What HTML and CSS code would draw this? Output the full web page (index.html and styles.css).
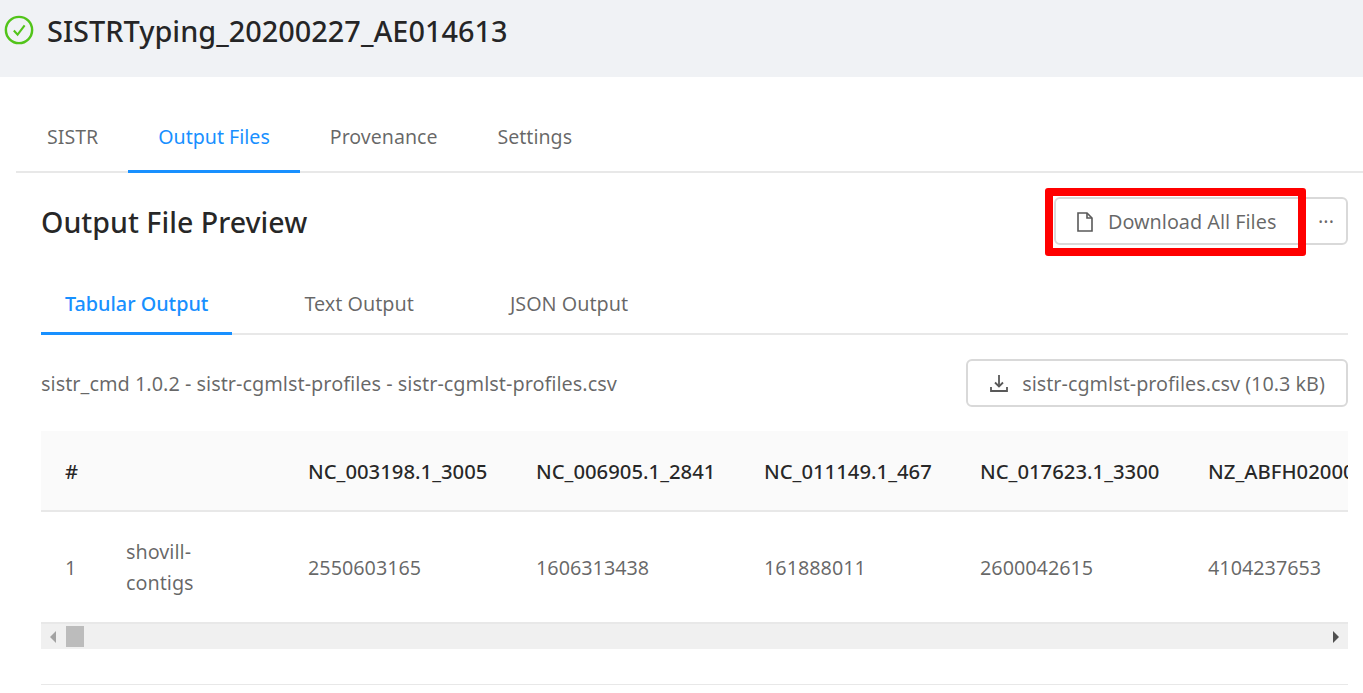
FILE: index.html
```html
<!DOCTYPE html>
<html>
  <head>
    <title>SISTRTyping_20200227_AE014613</title>
    <link rel="stylesheet" href="styles.css">
  </head>
  <body>
    <header class="page-header">
      <svg class="status-icon" viewBox="0 0 32 32" fill="none" stroke="#52c41a">
        <circle cx="16" cy="16" r="14" stroke-width="2.6"/>
        <path d="M10.5 16.5l4 4.5 7.5-10" stroke-width="2.2"/>
      </svg>
      <h1>SISTRTyping_20200227_AE014613</h1>
    </header>

    <nav class="main-tabs">
      <a class="main-tab">SISTR</a>
      <a class="main-tab active">Output Files</a>
      <a class="main-tab">Provenance</a>
      <a class="main-tab">Settings</a>
    </nav>

    <main class="content">
      <div class="preview-head">
        <h2>Output File Preview</h2>
        <div class="btn-group">
          <button class="btn btn-download">
            <svg class="icon-file" viewBox="0 0 18 20" fill="none" stroke="#595959" stroke-width="1.6">
              <path d="M2 1h9l5 5v13H2z"/>
              <path d="M11 1v5h5"/>
            </svg>
            Download All Files
          </button>
          <button class="btn btn-more">&middot;&middot;&middot;</button>
        </div>
        <div class="highlight"></div>
      </div>

      <div class="sub-tabs">
        <a class="sub-tab active">Tabular Output</a>
        <a class="sub-tab">Text Output</a>
        <a class="sub-tab">JSON Output</a>
      </div>

      <div class="file-row">
        <span class="file-path">sistr_cmd 1.0.2 - sistr-cgmlst-profiles - sistr-cgmlst-profiles.csv</span>
        <button class="btn btn-file">
          <svg class="icon-save" viewBox="0 0 20 20" fill="none" stroke="#595959" stroke-width="1.8">
            <path d="M10 2v11"/>
            <path d="M6 9.5l4 4 4-4" />
            <path d="M2 14v4h16v-4"/>
          </svg>
          sistr-cgmlst-profiles.csv (10.3 kB)
        </button>
      </div>

      <div class="table-wrap">
        <table>
          <thead>
            <tr>
              <th class="col-index">#</th>
              <th class="col-name"></th>
              <th class="col-wide">NC_003198.1_3005</th>
              <th class="col-wide">NC_006905.1_2841</th>
              <th class="col-narrow">NC_011149.1_467</th>
              <th class="col-wide">NC_017623.1_3300</th>
              <th class="col-wide">NZ_ABFH02000001_1000</th>
            </tr>
          </thead>
          <tbody>
            <tr>
              <td>1</td>
              <td>shovill-<br>contigs</td>
              <td>2550603165</td>
              <td>1606313438</td>
              <td>161888011</td>
              <td>2600042615</td>
              <td>4104237653</td>
            </tr>
          </tbody>
        </table>
      </div>

      <div class="scrollbar">
        <span class="arrow-left"></span>
        <span class="thumb"></span>
        <span class="arrow-right"></span>
      </div>

      <div class="bottom-rule"></div>
    </main>
  </body>
</html>
```

FILE: styles.css
```css
body {
  margin: 0;
  font-family: "Noto Sans", Arial, sans-serif;
  font-size: 19.8px;
  color: rgba(0, 0, 0, 0.6);
  background-color: #fff;
  overflow: hidden;
}
h1,
h2 {
  margin: 0;
  color: rgba(0, 0, 0, 0.85);
  font-weight: 500;
}
.page-header {
  height: 77px;
  box-sizing: border-box;
  padding: 15px 0 0 4px;
  display: flex;
  align-items: flex-start;
  background-color: #f0f2f5;
}
.status-icon {
  width: 30px;
  height: 30px;
  margin-right: 13px;
}
.page-header h1 {
  font-size: 28.9px;
  line-height: 31px;
}
.main-tabs {
  display: flex;
  height: 96px;
  margin-left: 16px;
  padding-left: 1px;
  box-sizing: border-box;
  align-items: flex-end;
  border-bottom: 2px solid #e8e8e8;
}
.main-tab {
  padding: 0 30px;
  height: 50px;
  margin-bottom: -2px;
  box-sizing: border-box;
  font-size: 19.6px;
  white-space: nowrap;
}
.main-tab.active {
  color: #1890ff;
  border-bottom: 3px solid #1890ff;
}
.content {
  position: relative;
  padding: 0 15px 0 41px;
}
.preview-head {
  display: flex;
  justify-content: space-between;
  align-items: center;
  height: 96px;
}
.preview-head h2 {
  font-size: 28.6px;
}
.btn {
  font: inherit;
  color: rgba(0, 0, 0, 0.6);
  background-color: #fff;
  border: 2px solid #d9d9d9;
  border-radius: 6px;
  height: 48px;
  cursor: pointer;
}
.btn-group {
  display: flex;
}
.btn-download {
  width: 252px;
  padding: 1px 0 0 20px;
  border-radius: 6px 0 0 6px;
  display: flex;
  align-items: center;
  gap: 14px;
  white-space: nowrap;
}
.btn-more {
  width: 44px;
  margin-left: -2px;
  border-radius: 0 6px 6px 0;
}
.icon-file {
  width: 18px;
  height: 20px;
}
.icon-save {
  width: 20px;
  height: 20px;
}
.highlight {
  position: absolute;
  top: 15px;
  left: 1045px;
  width: 245px;
  height: 52px;
  border: 8px solid #f00;
  border-radius: 3px;
}
.sub-tabs {
  display: flex;
  height: 66px;
  border-bottom: 2px solid #e8e8e8;
  box-sizing: border-box;
}
.sub-tab {
  padding: 21px 24px 0;
  margin-right: 48px;
  height: 66px;
  box-sizing: border-box;
  white-space: nowrap;
}
.sub-tab.active {
  color: #1890ff;
  font-weight: 500;
  border-bottom: 3px solid #1890ff;
}
.file-row {
  display: flex;
  justify-content: space-between;
  align-items: center;
  height: 96px;
}
.file-path {
  font-size: 19.9px;
}
.btn-file {
  width: 382px;
  display: flex;
  align-items: center;
  justify-content: center;
  gap: 13px;
  white-space: nowrap;
}
.table-wrap {
  overflow: hidden;
}
table {
  border-collapse: collapse;
  table-layout: fixed;
  width: 1371px;
  text-align: left;
}
th,
td {
  padding: 0 0 0 24px;
  white-space: nowrap;
  overflow: hidden;
}
th {
  height: 79px;
  color: rgba(0, 0, 0, 0.85);
  font-size: 20.3px;
  font-weight: 500;
  background-color: #fafafa;
  border-bottom: 2px solid #e8e8e8;
}
td {
  height: 110px;
  line-height: 31px;
}
.col-index {
  width: 37px;
}
.col-name {
  width: 158px;
}
.col-wide {
  width: 204px;
}
.col-narrow {
  width: 192px;
}
.scrollbar {
  display: flex;
  align-items: center;
  height: 27px;
  background-color: #f0f0f0;
  border-top: 2px solid #e8e8e8;
  box-sizing: border-box;
  position: relative;
}
.arrow-left {
  width: 0;
  height: 0;
  margin-left: 9px;
  border: 6px solid transparent;
  border-left: 0;
  border-right-color: #a3a3a3;
}
.thumb {
  width: 18px;
  height: 21px;
  margin-left: 10px;
  background-color: #bcbcbc;
}
.arrow-right {
  width: 0;
  height: 0;
  margin-left: auto;
  margin-right: 9px;
  border: 6px solid transparent;
  border-right: 0;
  border-left-color: #505050;
}
.bottom-rule {
  margin-top: 35px;
  border-top: 1px solid #e8e8e8;
}
```
